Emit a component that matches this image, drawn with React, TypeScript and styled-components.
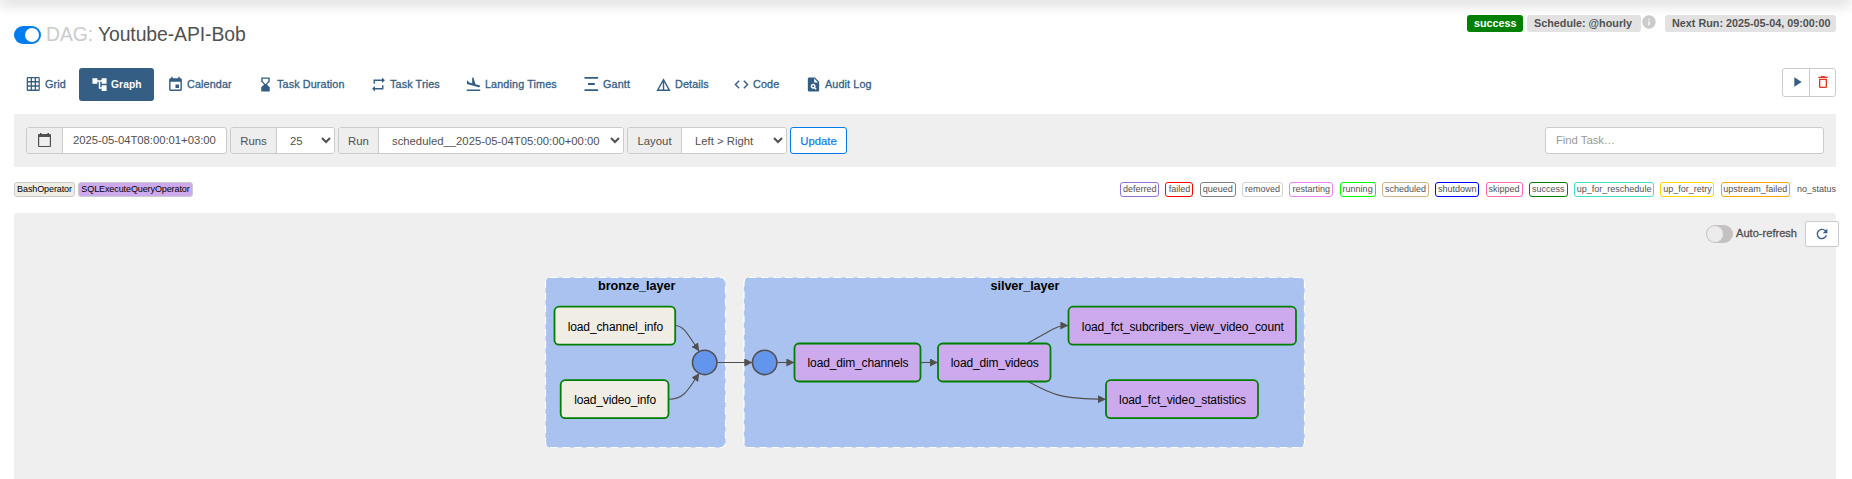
import React from "react";
import styled, { createGlobalStyle } from "styled-components";
import {
  MdAccountTree,
  MdEvent,
  MdHourglassBottom,
  MdRepeat,
  MdFlightLand,
  MdDetails,
  MdCode,
  MdPlagiarism,
  MdPlayArrow,
  MdDeleteOutline,
  MdRefresh,
  MdInfo,
} from "react-icons/md";

const GlobalStyle = createGlobalStyle`
  * { box-sizing: border-box; }
  body {
    margin: 0;
    background: #fff;
    color: #51504f;
    font-family: Arial, "Liberation Sans", sans-serif;
    font-size: 12.6px;
    overflow: hidden;
  }
  input, select, button { font-family: inherit; color: inherit; }
`;

const Page = styled.div`
  height: 479px;
  padding: 0 16px 0 14px;
  display: flex;
  flex-direction: column;
  overflow: hidden;
`;

const NavShadow = styled.div`
  height: 0;
  margin: 0 -10px 0 -10px;
  box-shadow: 0 0 13px 5px rgba(0, 0, 0, 0.16);
`;

const Header = styled.header`
  display: flex;
  justify-content: space-between;
  height: 68px;
  padding-top: 15px;
`;

const TitleRow = styled.div`
  display: flex;
  align-items: center;
  height: 18px;
  margin-top: 11px;
`;

const Switch = styled.span<{ $on?: boolean }>`
  display: flex;
  justify-content: ${(p) => (p.$on ? "flex-end" : "flex-start")};
  width: 27px;
  height: 18px;
  padding: ${(p) => (p.$on ? "2px" : "1px")};
  border-radius: 9px;
  background: ${(p) => (p.$on ? "#017cee" : "#c4c2c1")};
  &::after {
    content: "";
    width: ${(p) => (p.$on ? "14px" : "16px")};
    height: ${(p) => (p.$on ? "14px" : "16px")};
    border-radius: 50%;
    background: ${(p) => (p.$on ? "#fff" : "#edecec")};
  }
`;

const Title = styled.h3`
  margin: -3px 0 0 5px;
  font-size: 19.4px;
  line-height: 20px;
  font-weight: 400;
  letter-spacing: -0.1px;
  white-space: pre;
`;

const Muted = styled.span`
  color: #cbcbcb;
`;

const Badges = styled.div`
  display: flex;
  align-items: flex-start;
`;

const Badge = styled.span<{ $success?: boolean; $w: number }>`
  width: ${(p) => p.$w}px;
  height: 17px;
  padding-left: 7px;
  border-radius: 3px;
  font-size: 10.8px;
  line-height: 17px;
  font-weight: 700;
  white-space: nowrap;
  background: ${(p) => (p.$success ? "#008000" : "#e2e2e2")};
  color: ${(p) => (p.$success ? "#fff" : "#51504f")};
  margin-left: 4px;
`;

const InfoMark = styled(MdInfo)`
  width: 16px;
  height: 16px;
  margin: -1px 4px 0 0;
  color: #cbcbcb;
`;

const NavRow = styled.nav`
  display: flex;
  justify-content: space-between;
  height: 46px;
`;

const Tabs = styled.div`
  display: flex;
  gap: 1px;
  height: 33px;
`;

const Tab = styled.a<{ $active?: boolean; $w: number }>`
  display: flex;
  align-items: center;
  gap: 3px;
  width: ${(p) => p.$w}px;
  padding-left: 12px;
  border-radius: 3px;
  font-size: ${(p) => (p.$active ? "10.2px" : "10.8px")};
  font-weight: ${(p) => (p.$active ? 700 : 400)};
  white-space: nowrap;
  color: ${(p) => (p.$active ? "#fff" : "#355e84")};
  background: ${(p) => (p.$active ? "#355e84" : "transparent")};
  svg {
    width: 17px;
    height: 17px;
    flex: none;
    stroke-width: 0;
  }
  &:first-child {
    padding-left: 11px;
  }
`;

const TabLabel = styled.span<{ $active?: boolean }>`
  padding-bottom: ${(p) => (p.$active ? "0" : "2px")};
  letter-spacing: 0.12px;
  -webkit-text-stroke: ${(p) => (p.$active ? "0" : "0.3px")} currentColor;
`;

const ActionGroup = styled.div`
  display: flex;
  width: 54px;
  height: 29px;
  border: 1px solid #cbcbcb;
  border-radius: 3px;
`;

const Action = styled.button<{ $danger?: boolean }>`
  flex: 1;
  display: flex;
  align-items: center;
  justify-content: center;
  padding: 0 0 1px 1px;
  border: 0;
  background: transparent;
  color: ${(p) => (p.$danger ? "#e43921" : "#355e84")};
  & + & {
    border-left: 1px solid #cbcbcb;
    padding-left: 0;
  }
`;

const FilterBar = styled.section`
  display: flex;
  justify-content: space-between;
  height: 53px;
  padding: 13px 12px 0;
  background: #efefef;
`;

const Filters = styled.div`
  display: flex;
  gap: 3px;
`;

const Group = styled.div<{ $w: number }>`
  display: flex;
  width: ${(p) => p.$w}px;
  height: 27px;
  border: 1px solid #cbcbcb;
  border-radius: 3px;
  overflow: hidden;
  background: #fff;
`;

const Addon = styled.span<{ $w: number }>`
  display: flex;
  align-items: center;
  justify-content: center;
  flex: none;
  width: ${(p) => p.$w}px;
  background: #eee;
  border-right: 1px solid #cbcbcb;
  font-size: 11.4px;
`;

const TextInput = styled.input`
  flex: 1;
  min-width: 0;
  border: 0;
  padding: 0 0 1px 10px;
  font-size: 11.3px;
  letter-spacing: -0.03px;
  background: transparent;
  &::placeholder {
    color: #999;
  }
`;

const Select = styled.select`
  flex: 1;
  min-width: 0;
  border: 0;
  padding: 1px 0 0 9px;
  font-size: 11.3px;
  background: #fff;
`;

const UpdateButton = styled.button`
  width: 57px;
  height: 27px;
  border: 1px solid #017cee;
  border-radius: 3px;
  background: #fff;
  color: #017cee;
  font-size: 11.3px;
  padding: 0;
  -webkit-text-stroke: 0.2px currentColor;
`;

const Legend = styled.section`
  display: flex;
  justify-content: space-between;
  height: 46px;
  padding-top: 15px;
`;

const LegendGroup = styled.div<{ $gap: number }>`
  display: flex;
  gap: ${(p) => p.$gap}px;
`;

const LegendItem = styled.span<{ $w: number; $border: string; $bg?: string }>`
  width: ${(p) => p.$w}px;
  height: 15px;
  border: 1px solid ${(p) => p.$border};
  border-radius: 3px;
  background: ${(p) => p.$bg ?? "#fff"};
  color: ${(p) => (p.$bg ? "#000" : "#51504f")};
  font-size: 9px;
  letter-spacing: ${(p) => (p.$bg ? "-0.1px" : "0")};
  line-height: 12px;
  text-align: center;
  white-space: nowrap;
`;

const GraphPanel = styled.main`
  display: flex;
  flex-direction: column;
  height: 266px;
  background: #efefef;
  border-radius: 4px 4px 0 0;
`;

const GraphTools = styled.div`
  display: flex;
  align-items: center;
  justify-content: flex-end;
  height: 26px;
  margin: 8px -3px 0 0;
`;

const RefreshLabel = styled.span`
  width: 72px;
  padding: 0 0 2px 3px;
  font-size: 11.1px;
  -webkit-text-stroke: 0.3px currentColor;
  white-space: nowrap;
`;

const RefreshButton = styled.button`
  display: flex;
  align-items: center;
  justify-content: center;
  width: 34px;
  height: 26px;
  padding: 0 0 1px;
  border: 1px solid #cbcbcb;
  border-radius: 2px;
  background: #fff;
  color: #355e84;
`;

const Canvas = styled.svg`
  display: block;
  width: 1822px;
  height: 232px;
  font-family: Arial, "Liberation Sans", sans-serif;
`;

const GridIcon = () => (
  <svg viewBox="0 0 17 17" fill="currentColor">
    <path
      fillRule="evenodd"
      d="M3,1h10.5a1.3,1.3 0 0 1 1.3,1.3v11.4a1.3,1.3 0 0 1 -1.3,1.3h-10.5a1.3,1.3 0 0 1 -1.3,-1.3v-11.4a1.3,1.3 0 0 1 1.3,-1.3z
         M3,2.3v2.8h2.7v-2.8z M7,2.3v2.8h2.7v-2.8z M11,2.3v2.8h2.6v-2.8z
         M3,6.5v2.8h2.7v-2.8z M7,6.5v2.8h2.7v-2.8z M11,6.5v2.8h2.6v-2.8z
         M3,10.7v2.8h2.7v-2.8z M7,10.7v2.8h2.7v-2.8z M11,10.7v2.8h2.6v-2.8z"
    />
  </svg>
);

const GanttIcon = () => (
  <svg viewBox="0 0 17 17" fill="currentColor">
    <path d="M1.5,1h13.6v1.8h-13.6z M5,7h6.8v2h-6.8z M1.5,13.2h13.6v1.8h-13.6z" />
  </svg>
);

const CalendarBlankIcon = () => (
  <svg width={15} height={15} viewBox="0 0 15 15" fill="currentColor">
    <path
      fillRule="evenodd"
      d="M3,0h1.6v1h5.8v-1h1.6v1h1a1,1 0 0 1 1,1v11a1,1 0 0 1 -1,1h-11a1,1 0 0 1 -1,-1v-11a1,1 0 0 1 1,-1h1z M2.2,4v8.9h10.6v-8.9z"
    />
  </svg>
);

const tabs: { label: string; icon: React.ComponentType; w: number; active?: boolean }[] = [
  { label: "Grid", icon: GridIcon, w: 64 },
  { label: "Graph", icon: MdAccountTree, w: 75, active: true },
  { label: "Calendar", icon: MdEvent, w: 89 },
  { label: "Task Duration", icon: MdHourglassBottom, w: 112 },
  { label: "Task Tries", icon: MdRepeat, w: 94 },
  { label: "Landing Times", icon: MdFlightLand, w: 117 },
  { label: "Gantt", icon: GanttIcon, w: 71 },
  { label: "Details", icon: MdDetails, w: 77 },
  { label: "Code", icon: MdCode, w: 71 },
  { label: "Audit Log", icon: MdPlagiarism, w: 90 },
];

const states: [string, string, number][] = [
  ["deferred", "mediumpurple", 39],
  ["failed", "red", 28],
  ["queued", "gray", 36],
  ["removed", "lightgrey", 41],
  ["restarting", "violet", 44],
  ["running", "lime", 36],
  ["scheduled", "tan", 47],
  ["shutdown", "blue", 44],
  ["skipped", "hotpink", 37],
  ["success", "green", 39],
  ["up_for_reschedule", "turquoise", 80],
  ["up_for_retry", "gold", 54],
  ["upstream_failed", "orange", 69],
  ["no_status", "transparent", 40],
];

const BASH = "#f0ede4";
const SQL = "#cdaaed";

const clusters = [
  { label: "bronze_layer", x: 545.5, w: 180, tx: 636.7, tw: 77.5 },
  { label: "silver_layer", x: 744, w: 560.5, tx: 1025, tw: 69 },
];

const nodes = [
  { label: "load_channel_info", x: 554.5, y: 306.7, w: 120.7, tw: 95.5, fill: BASH },
  { label: "load_video_info", x: 560.7, y: 380.2, w: 107.8, tw: 82, fill: BASH },
  { label: "load_dim_channels", x: 794.5, y: 343.5, w: 126, tw: 101, fill: SQL },
  { label: "load_dim_videos", x: 938, y: 343.5, w: 112.5, tw: 88, fill: SQL },
  { label: "load_fct_subcribers_view_video_count", x: 1068.5, y: 306.7, w: 227.5, tw: 202, fill: SQL },
  { label: "load_fct_video_statistics", x: 1106, y: 380.2, w: 152, tw: 127, fill: SQL },
];

const edges = [
  "M675,325.5 C684,325.5 688,335 699,351",
  "M669,399.2 C684,399.2 688,390 699,373.5",
  "M717.5,362.5 L752,362.5",
  "M777.5,362.5 L794,362.5",
  "M921,362.5 L937.5,362.5",
  "M1028,343 L1046,333 C1056,327 1060,325.5 1068,325.5",
  "M1028,381.5 C1050,393.5 1059,399.2 1105.5,399.2",
];

const Graph = () => (
  <Canvas viewBox="14 247 1822 232">
    <defs>
      <marker id="arrow" viewBox="0 0 10 10" refX="9.5" refY="5" markerUnits="userSpaceOnUse" markerWidth="8" markerHeight="8" orient="auto" preserveAspectRatio="none">
        <path d="M0,0 L10,5 L0,10 z" fill="#51504f" />
      </marker>
    </defs>
    {clusters.map((c) => (
      <g key={c.label}>
        <rect x={c.x} y={277.5} width={c.w} height={170} rx={5} fill="#aac2ef" stroke="#fff" strokeWidth={1.2} strokeDasharray="7.3 4.8" />
        <text x={c.tx} y={290} textAnchor="middle" fontSize={12.7} fontWeight={700} textLength={c.tw}>
          {c.label}
        </text>
      </g>
    ))}
    {edges.map((d) => (
      <path key={d} d={d} fill="none" stroke="#51504f" strokeWidth={1.1} markerEnd="url(#arrow)" />
    ))}
    {[704.7, 764.7].map((cx) => (
      <circle key={cx} cx={cx} cy={362.4} r={12.2} fill="#6495ed" stroke="#51504f" strokeWidth={1.6} />
    ))}
    {nodes.map((n) => (
      <g key={n.label}>
        <rect x={n.x} y={n.y} width={n.w} height={38} rx={4.5} fill={n.fill} stroke="green" strokeWidth={1.8} />
        <text x={n.x + n.w / 2 + 0.6} y={n.y + 23.9} textAnchor="middle" fontSize={12} textLength={n.tw}>
          {n.label}
        </text>
      </g>
    ))}
  </Canvas>
);

export default function App() {
  return (
    <Page>
      <GlobalStyle />
      <NavShadow />
      <Header>
        <TitleRow>
          <Switch $on />
          <Title>
            <Muted>DAG: </Muted>Youtube-API-Bob
          </Title>
        </TitleRow>
        <Badges>
          <Badge $success $w={56}>success</Badge>
          <Badge $w={114}>Schedule: @hourly</Badge>
          <InfoMark />
          <Badge $w={171}>Next Run: 2025-05-04, 09:00:00</Badge>
        </Badges>
      </Header>
      <NavRow>
        <Tabs>
          {tabs.map(({ label, icon: Icon, w, active }) => (
            <Tab key={label} $w={w} $active={active}>
              <Icon />
              <TabLabel $active={active}>{label}</TabLabel>
            </Tab>
          ))}
        </Tabs>
        <ActionGroup>
          <Action><MdPlayArrow size={16} /></Action>
          <Action $danger><MdDeleteOutline size={16} /></Action>
        </ActionGroup>
      </NavRow>
      <FilterBar>
        <Filters>
          <Group $w={201}>
            <Addon $w={36}><CalendarBlankIcon /></Addon>
            <TextInput defaultValue="2025-05-04T08:00:01+03:00" />
          </Group>
          <Group $w={105}>
            <Addon $w={46}>Runs</Addon>
            <Select><option>25</option></Select>
          </Group>
          <Group $w={286}>
            <Addon $w={40}>Run</Addon>
            <Select><option>scheduled__2025-05-04T05:00:00+00:00</option></Select>
          </Group>
          <Group $w={160}>
            <Addon $w={54}>Layout</Addon>
            <Select><option>Left &gt; Right</option></Select>
          </Group>
          <UpdateButton>Update</UpdateButton>
        </Filters>
        <Group $w={279}>
          <TextInput placeholder="Find Task…" />
        </Group>
      </FilterBar>
      <Legend>
        <LegendGroup $gap={3}>
          <LegendItem $w={61} $border="#cbcbcb" $bg={BASH}>BashOperator</LegendItem>
          <LegendItem $w={115} $border="#cbcbcb" $bg={SQL}>SQLExecuteQueryOperator</LegendItem>
        </LegendGroup>
        <LegendGroup $gap={6.3}>
          {states.map(([name, color, w]) => (
            <LegendItem key={name} $w={w} $border={color}>{name}</LegendItem>
          ))}
        </LegendGroup>
      </Legend>
      <GraphPanel>
        <GraphTools>
          <Switch />
          <RefreshLabel>Auto-refresh</RefreshLabel>
          <RefreshButton><MdRefresh size={16} /></RefreshButton>
        </GraphTools>
        <Graph />
      </GraphPanel>
    </Page>
  );
}
